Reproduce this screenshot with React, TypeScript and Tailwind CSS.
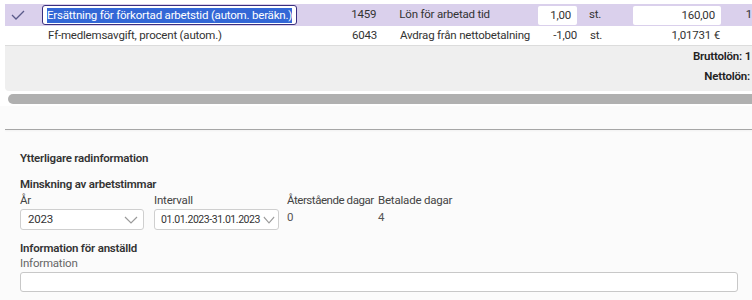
import React from "react";

const font = { fontFamily: "Roboto, 'Noto Sans', sans-serif" };

const Chevron = ({ w = 14 }: { w?: number }) => (
  <svg width={w} height="8" viewBox="0 0 14 8" fill="none" preserveAspectRatio="none" className="shrink-0">
    <path d="M1 1l6 6 6-6" stroke="#9a9a9a" strokeWidth="1.2" />
  </svg>
);

const Check = () => (
  <svg width="14" height="10" viewBox="0 0 14 10" fill="none">
    <path d="M1 5l4 4 8-8" stroke="#5a5a8a" strokeWidth="1.3" />
  </svg>
);

const App = () => {
  return (
    <div
      style={font}
      className="w-[752px] h-[300px] overflow-hidden bg-[#fbfbfb] text-[11.5px] tracking-[-0.2px] text-[#333]"
    >
      {/* tabell */}
      <div className="bg-white pt-[4px] pl-[5px]">
        <div className="flex h-[22px] items-center bg-[#dad0ec] whitespace-nowrap">
          <div className="w-[37px] pl-[6px] flex items-center">
            <Check />
          </div>
          <div className="w-[300px]">
            <div className="w-[255px] h-[20px] border border-[#3b2e7e] rounded-[3px] bg-white flex items-center pl-[4px]">
              <span className="bg-[#3367d6] text-white leading-[15px]">
                Ersättning för förkortad arbetstid (autom. beräkn.)
              </span>
            </div>
          </div>
          <div className="w-[35px] text-right">1459</div>
          <div className="w-[158px] pl-[23px]">Lön för arbetad tid</div>
          <div className="w-[45px] pl-[4px]">
            <div className="w-[39px] h-[19px] bg-white rounded-[2px] text-right pr-[6px] leading-[19px]">1,00</div>
          </div>
          <div className="w-[50px] pl-[10px]">st.</div>
          <div className="w-[96px] pl-[4px]">
            <div className="w-[88px] h-[19px] bg-white rounded-[2px] text-right pr-[6px] leading-[19px]">160,00</div>
          </div>
          <div className="pl-[21px]">1</div>
        </div>
        <div className="flex h-[20px] items-center border-b border-[#dcdcdc] whitespace-nowrap">
          <div className="w-[37px]" />
          <div className="w-[300px] pl-[6px]">Ff-medlemsavgift, procent (autom.)</div>
          <div className="w-[35px] text-right">6043</div>
          <div className="w-[158px] pl-[23px]">Avdrag från nettobetalning</div>
          <div className="w-[42px] text-right">-1,00</div>
          <div className="w-[53px] pl-[13px]">st.</div>
          <div className="w-[90px] text-right">1,01731 €</div>
        </div>
        <div className="h-[45px] bg-[#efefef] rounded-bl-[4px] flex flex-col items-end pt-[3px] gap-[6px] whitespace-nowrap">
          <div className="font-semibold text-[#222] leading-[14px] mr-[1px]">Bruttolön: 1</div>
          <div className="font-semibold text-[#222] leading-[14px] mr-[2px]">Nettolön:</div>
        </div>
        <div className="h-[3px]" />
        <div className="ml-[3px] h-[10px] bg-[#b0b0b0] rounded-l-[5px]" />
        <div className="h-[2px]" />
      </div>

      {/* panel */}
      <div className="mt-[23px] ml-[5px] border-t border-[#a6a6a6] shadow-[0_1px_2px_rgba(0,0,0,0.06)]" />
      <div className="pl-[20px] pt-[20px]">
        <div className="font-semibold leading-[16px]">Ytterligare radinformation</div>
        <div className="mt-[10px] font-semibold leading-[16px]">Minskning av arbetstimmar</div>
        <div className="flex whitespace-nowrap">
          <div className="w-[134px]">
            <div className="leading-[16px] text-[#444]">År</div>
            <div className="mt-[1px] w-[124px] h-[21px] bg-white border border-[#cfcfcf] rounded-[3px] flex items-center justify-between pl-[7px] pr-[5px]">
              <span>2023</span>
              <Chevron />
            </div>
          </div>
          <div className="w-[133px]">
            <div className="leading-[16px] text-[#444]">Intervall</div>
            <div className="mt-[1px] w-[125px] h-[21px] bg-white border border-[#cfcfcf] rounded-[3px] flex items-center justify-between pl-[6px] pr-[3px]">
              <span className="text-[10.5px] tracking-[-0.45px]">01.01.2023-31.01.2023</span>
              <Chevron w={12} />
            </div>
          </div>
          <div className="w-[91px]">
            <div className="leading-[16px] text-[#444] tracking-[-0.45px]">Återstående dagar</div>
            <div className="text-[#555] leading-[16px] mt-[1px]">0</div>
          </div>
          <div>
            <div className="leading-[16px] text-[#444]">Betalade dagar</div>
            <div className="text-[#555] leading-[16px] mt-[1px]">4</div>
          </div>
        </div>
        <div className="mt-[10px] font-semibold leading-[16px]">Information för anställd</div>
        <div className="text-[#666] leading-[15px]">Information</div>
        <div className="mt-[1px] w-[718px] h-[20px] bg-white border border-[#c8c8c8] rounded-[3px]" />
      </div>
    </div>
  );
};

export default App;
